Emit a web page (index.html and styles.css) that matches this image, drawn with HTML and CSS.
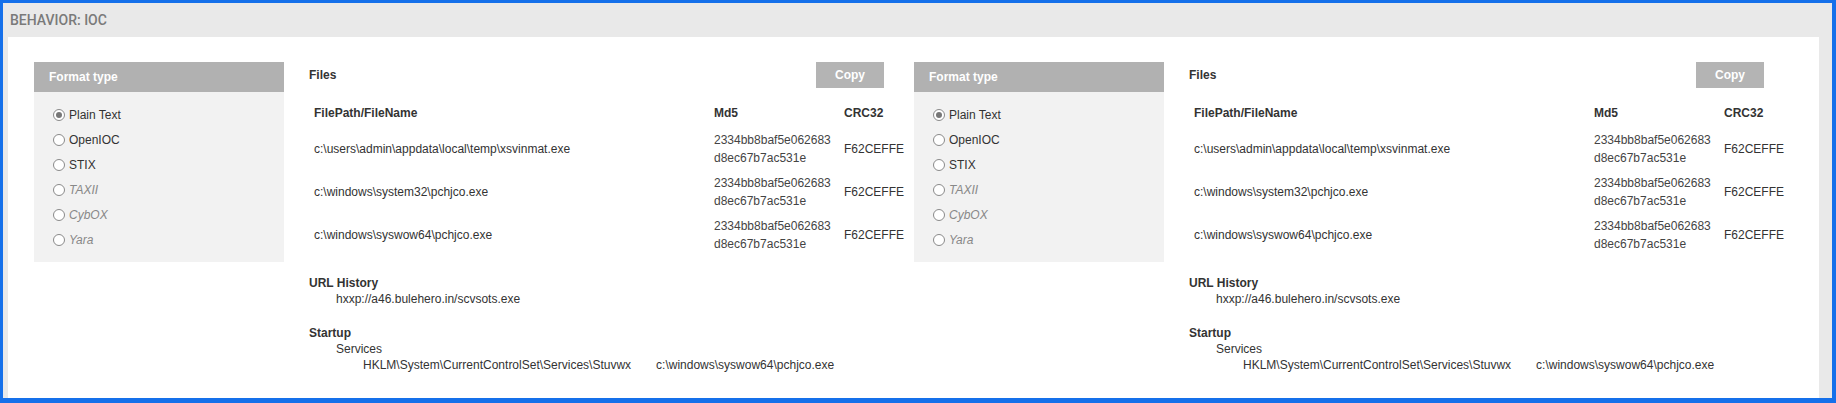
FILE: index.html
```html
<!DOCTYPE html>
<html lang="en">
<head>
  <meta charset="UTF-8">
  <meta name="viewport" content="width=device-width, initial-scale=1.0">
  <title>Behavior: IOC</title>
  <link rel="stylesheet" href="styles.css">
</head>
<body>
  <div class="ioc-frame">
    <div class="ioc-header">BEHAVIOR: IOC</div>
    <div class="ioc-body">

      <div class="ioc-block">
        <div class="format-panel">
          <div class="format-title">Format type</div>
          <ul class="format-list">
            <li class="format-item"><span class="radio checked"></span>Plain Text</li>
            <li class="format-item"><span class="radio"></span>OpenIOC</li>
            <li class="format-item"><span class="radio"></span>STIX</li>
            <li class="format-item disabled"><span class="radio"></span>TAXII</li>
            <li class="format-item disabled"><span class="radio"></span>CybOX</li>
            <li class="format-item disabled"><span class="radio"></span>Yara</li>
          </ul>
        </div>
        <div class="ioc-content">
          <div class="files-bar">
            <span class="files-title">Files</span>
            <button class="copy-btn">Copy</button>
          </div>
          <table class="files-table">
            <thead>
              <tr><th class="col-path">FilePath/FileName</th><th class="col-md5">Md5</th><th class="col-crc">CRC32</th></tr>
            </thead>
            <tbody>
              <tr><td>c:\users\admin\appdata\local\temp\xsvinmat.exe</td><td class="md5">2334bb8baf5e062683d8ec67b7ac531e</td><td>F62CEFFE</td></tr>
              <tr><td>c:\windows\system32\pchjco.exe</td><td class="md5">2334bb8baf5e062683d8ec67b7ac531e</td><td>F62CEFFE</td></tr>
              <tr><td>c:\windows\syswow64\pchjco.exe</td><td class="md5">2334bb8baf5e062683d8ec67b7ac531e</td><td>F62CEFFE</td></tr>
            </tbody>
          </table>
          <div class="ioc-section url-section">
            <div class="section-title">URL History</div>
            <div class="indent">hxxp://a46.bulehero.in/scvsots.exe</div>
          </div>
          <div class="ioc-section">
            <div class="section-title">Startup</div>
            <div class="indent">Services</div>
            <div class="indent indent-2 reg-row">
              <span class="reg-key">HKLM\System\CurrentControlSet\Services\Stuvwx</span>
              <span>c:\windows\syswow64\pchjco.exe</span>
            </div>
          </div>
        </div>
      </div>

      <div class="ioc-block">
        <div class="format-panel">
          <div class="format-title">Format type</div>
          <ul class="format-list">
            <li class="format-item"><span class="radio checked"></span>Plain Text</li>
            <li class="format-item"><span class="radio"></span>OpenIOC</li>
            <li class="format-item"><span class="radio"></span>STIX</li>
            <li class="format-item disabled"><span class="radio"></span>TAXII</li>
            <li class="format-item disabled"><span class="radio"></span>CybOX</li>
            <li class="format-item disabled"><span class="radio"></span>Yara</li>
          </ul>
        </div>
        <div class="ioc-content">
          <div class="files-bar">
            <span class="files-title">Files</span>
            <button class="copy-btn">Copy</button>
          </div>
          <table class="files-table">
            <thead>
              <tr><th class="col-path">FilePath/FileName</th><th class="col-md5">Md5</th><th class="col-crc">CRC32</th></tr>
            </thead>
            <tbody>
              <tr><td>c:\users\admin\appdata\local\temp\xsvinmat.exe</td><td class="md5">2334bb8baf5e062683d8ec67b7ac531e</td><td>F62CEFFE</td></tr>
              <tr><td>c:\windows\system32\pchjco.exe</td><td class="md5">2334bb8baf5e062683d8ec67b7ac531e</td><td>F62CEFFE</td></tr>
              <tr><td>c:\windows\syswow64\pchjco.exe</td><td class="md5">2334bb8baf5e062683d8ec67b7ac531e</td><td>F62CEFFE</td></tr>
            </tbody>
          </table>
          <div class="ioc-section url-section">
            <div class="section-title">URL History</div>
            <div class="indent">hxxp://a46.bulehero.in/scvsots.exe</div>
          </div>
          <div class="ioc-section">
            <div class="section-title">Startup</div>
            <div class="indent">Services</div>
            <div class="indent indent-2 reg-row">
              <span class="reg-key">HKLM\System\CurrentControlSet\Services\Stuvwx</span>
              <span>c:\windows\syswow64\pchjco.exe</span>
            </div>
          </div>
        </div>
      </div>

    </div>
  </div>
</body>
</html>
```

FILE: styles.css
```css
html, body {
  height: 100%;
}

body {
  margin: 0;
  font-family: "Liberation Sans", Arial, sans-serif;
  font-size: 12px;
  color: #333;
}

.ioc-frame {
  box-sizing: border-box;
  height: 100vh;
  display: flex;
  flex-direction: column;
  background-color: #e9e9e9;
  border-style: solid;
  border-color: #1570ea;
  border-width: 3px 4px 5px 3px;
  overflow: hidden;
}

.ioc-header {
  flex: 0 0 34px;
  display: flex;
  align-items: center;
  padding-left: 7px;
  font-family: Roboto, "Liberation Sans", sans-serif;
  font-size: 14px;
  font-weight: 500;
  color: #7a7a7a;
}

.ioc-body {
  flex: 1;
  display: flex;
  gap: 25px;
  margin: 0 13px 0 5px;
  padding: 25px 0 0 26px;
  background-color: #fff;
}

.ioc-block {
  flex: 0 0 855px;
  display: flex;
}

/* format type panel */
.format-panel {
  flex: 0 0 250px;
  align-self: flex-start;
  background-color: #f2f2f2;
}

.format-title {
  height: 30px;
  line-height: 30px;
  padding-left: 15px;
  background-color: #b1b1b1;
  color: #fff;
  font-weight: bold;
}

.format-list {
  list-style: none;
  margin: 0;
  padding: 10px 0 10px 19px;
}

.format-item {
  display: flex;
  align-items: center;
  height: 25px;
  color: #333;
}

.format-item.disabled {
  color: #888;
  font-style: italic;
}

.radio {
  box-sizing: border-box;
  width: 12px;
  height: 12px;
  margin-right: 4px;
  border: 1px solid #8a8a8a;
  border-radius: 50%;
  background-color: #fff;
  display: flex;
  align-items: center;
  justify-content: center;
}

.radio.checked::after {
  content: "";
  width: 6px;
  height: 6px;
  border-radius: 50%;
  background-color: #777;
}

/* files column */
.ioc-content {
  flex: 0 0 583px;
  min-width: 0;
  margin-left: 22px;
}

.files-bar {
  display: flex;
  align-items: center;
  justify-content: space-between;
  height: 26px;
  padding-left: 3px;
}

.files-title {
  font-weight: bold;
}

.copy-btn {
  width: 68px;
  height: 26px;
  margin-right: 5px;
  border: none;
  background-color: #b4b4b4;
  color: #fff;
  font-family: inherit;
  font-size: 12px;
  font-weight: bold;
}

.files-table {
  margin: 11px 0 0 3px;
  border-collapse: collapse;
  table-layout: fixed;
  width: 600px;
}

.files-table th {
  height: 28px;
  padding: 0 5px;
  text-align: left;
  font-weight: bold;
}

.col-path { width: 390px; }
.col-md5 { width: 120px; }
.col-crc { width: 60px; }

.files-table td {
  height: 43px;
  padding: 0 5px;
  line-height: 18px;
  vertical-align: middle;
}

.files-table td.md5 {
  word-break: break-all;
  color: #444;
}

.ioc-section {
  padding-left: 3px;
  line-height: 16px;
}

.url-section {
  margin: 19px 0 18px;
}

.section-title {
  font-weight: bold;
}

.indent {
  padding-left: 27px;
}

.indent-2 {
  padding-left: 54px;
}

.reg-row {
  display: flex;
  gap: 25px;
}
```
